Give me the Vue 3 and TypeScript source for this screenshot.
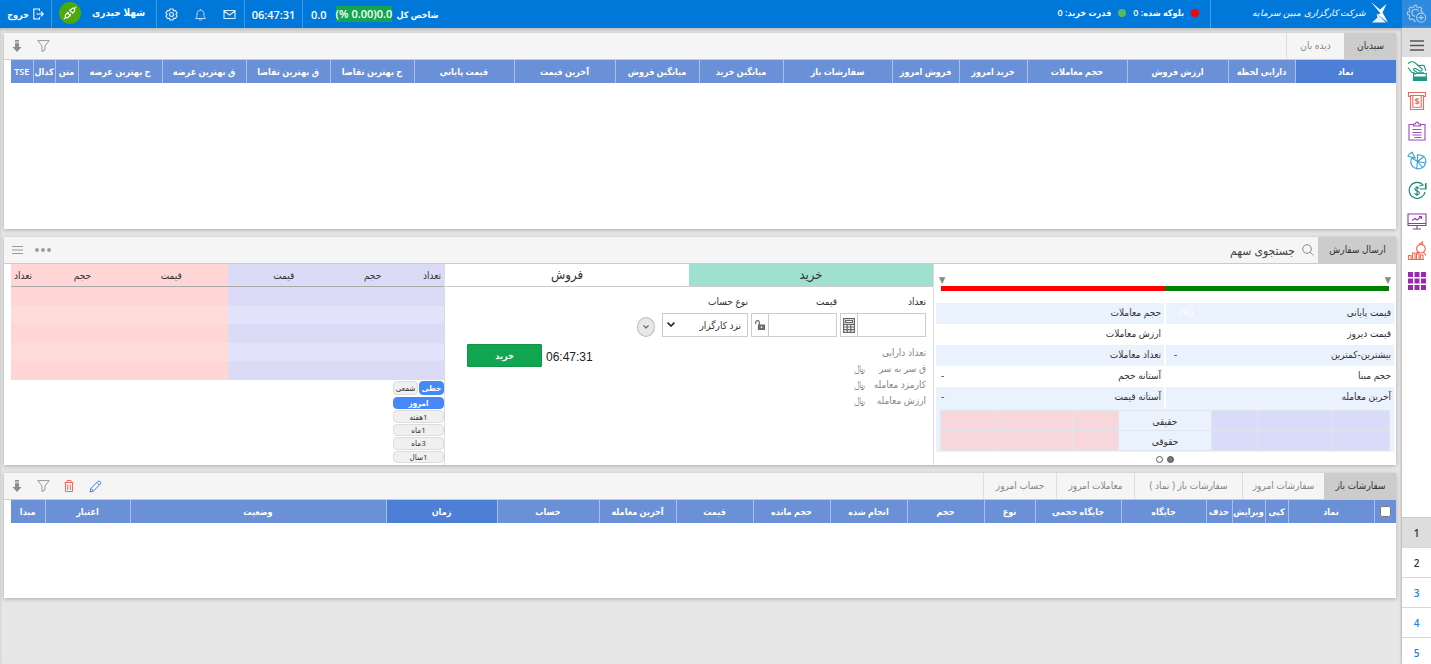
<script setup lang="ts">
import { ref } from 'vue'

interface Column {
  label: string
  width: number
  active?: boolean
}

interface SideIcon {
  name: string
  color: string
  line: string
  fill?: string
}

const col = (label: string, width: number, active = false): Column => ({ label, width, active })

const watchColumns: Column[] = [
  col('نماد', 101, true),
  col('دارایی لحظه', 67),
  col('ارزش فروش', 101),
  col('حجم معاملات', 100),
  col('خرید امروز', 68),
  col('فروش امروز', 67),
  col('سفارشات باز', 109),
  col('میانگین خرید', 84),
  col('میانگین فروش', 84),
  col('آخرین قیمت', 101),
  col('قیمت پایانی', 100),
  col('ح بهترین تقاضا', 84),
  col('ق بهترین تقاضا', 84),
  col('ق بهترین عرضه', 84),
  col('ح بهترین عرضه', 84),
  col('متن', 23),
  col('کدال', 22),
  col('TSE', 22),
]

const orderColumns: Column[] = [
  col('', 22),
  col('نماد', 86),
  col('کپی', 23),
  col('ویرایش', 33),
  col('حذف', 26),
  col('جایگاه', 85),
  col('جایگاه حجمی', 86),
  col('نوع', 51),
  col('حجم', 77),
  col('انجام شده', 77),
  col('حجم مانده', 77),
  col('قیمت', 77),
  col('آخرین معامله', 77),
  col('حساب', 102),
  col('زمان', 111, true),
  col('وضعیت', 256),
  col('اعتبار', 85),
  col('مبدا', 34),
]

const watchTabs: Column[] = [col('سبدبان', 52), col('دیده بان', 58)]
const orderTabs: Column[] = [
  col('سفارشات باز', 72),
  col('سفارشات امروز', 82),
  col('سفارشات باز ( نماد )', 108),
  col('معاملات امروز', 78),
  col('حساب امروز', 73),
]

const stats = [
  ['قیمت پایانی', '(%)', 'حجم معاملات', ''],
  ['قیمت دیروز', '', 'ارزش معاملات', ''],
  ['بیشترین-کمترین', '-', 'تعداد معاملات', ''],
  ['حجم مبنا', '', 'آستانه حجم', '-'],
  ['آخرین معامله', '', 'آستانه قیمت', '-'],
]

const traders = ['حقیقی', 'حقوقی']
const costs = [
  ['تعداد دارایی', ''],
  ['ق سر به سر', '﷼'],
  ['کارمزد معامله', '﷼'],
  ['ارزش معامله', '﷼'],
]
const ranges = ['امروز', '1هفته', '1ماه', '3ماه', '1سال']
const pages = [1, 2, 3, 4, 5]

const sideIcons: SideIcon[] = [
  {
    name: 'واریز',
    color: '#1b9a86',
    line: 'M1 2.500 4 .8C6 .6 8 1.500 9.500 3l5 4.500c1.500 1.500 0 3-1.500 2.500L9 7.800M1 6.500l3.500 4.700L8 12M9 7.800c-1.500-1-3 .2-2 1.500l3.500 2.500H17M10 4.500l7-.2 2 5.700M6.500 12.500h12.800v7H6.500zM8 12v2',
    fill: 'M6.500 16h12.800v3.500H6.500z',
  },
  {
    name: 'برداشت',
    color: '#ef6a5c',
    line: 'M3.500 5.500H1.500v-4h17v4h-2M3.500 4.500h13v14h-13zM5.800 4.500v11.700h8.400V4.500M12 8.300c-.6-.8-3.600-1-3.600.6 0 1.700 3.400.8 3.400 2.500 0 1.500-3 1.500-3.700.4M10 7v6.500',
  },
  {
    name: 'گزارش سفارش',
    color: '#9c4bb8',
    line: 'M6 3.500H2v15.500h16V3.500h-4M6.500 5V3h2c0-2.500 3-2.500 3 0h2v2zM5.500 8.500h9M5.500 11.500h9M5.500 14h9M7.500 16.500h7',
  },
  {
    name: 'سبد دارایی',
    color: '#3a9fd8',
    line: 'M10.500 10.500 17 5.500a7.500 7.500 0 1 1-13.200 5.200c0-1.200.4-2.500 1-3.600zM10.500 10.500 16 17M10.500 10.500l8.300 1.500M10.500 10.500V3.700c2.500 0 4.800.7 6.500 1.800M8 7 1 5.200C1.500 3.500 3 2 5 1.300zM10.500 10.500l-1 7.800',
  },
  {
    name: 'تبدیل ارز',
    color: '#16887e',
    line: 'M16.500 4.500A8 8 0 1 0 18 11M16.200 3.700 12.500 5M19 2v6h-6M18.500 2.500v5M12.300 7.500c-.8-1.500-4.500-1.300-4.500.6 0 2.500 4.600 1.300 4.600 3.800 0 2-4 2.200-4.800.4M10 5v10',
  },
  {
    name: 'تحلیل بازار',
    color: '#8c3bab',
    line: 'M1 3h18v11.500H1zM1 12.500h18M10 14.500v3M6 18h8M5 9.500l3-2 2 1.500 4.500-3.500M12 5.500h2.500V8',
  },
  {
    name: 'جستجوی نمودار',
    color: '#ee6a55',
    line: 'M1.500 18.500v-4H4v4zM5.500 18.500V12H8v6.500zM9.500 18.500V13H12v5.500zM13.500 18.500V14H16v4.500zM1 18.500h16M10 9.500A4.300 4.300 0 1 1 14.200 12C12 12 10.500 11 10 9.500zM11 11 9 12.500M16.500 11l2.500 3.500M12 3.500 15.500 1v3',
  },
]

const watchTab = ref(0)
const orderTab = ref(0)
const range = ref(0)
const page = ref(1)
const symbol = ref('')
const quantity = ref('')
const price = ref('')
const account = ref('broker')
</script>

<template>
  <div class="app" dir="rtl" lang="fa">
    <header class="topbar">
      <button class="settings" type="button" aria-label="تنظیمات">
        <svg width="20" height="20" viewBox="0 0 22 22" fill="none" stroke="#b9c8da" stroke-width="1.200">
          <path d="M8 1.500h2.500l.5 2 1.700.8 1.800-1.100 1.800 1.800-1 1.800.7 1.700 2 .5M8 1.500l-.5 2-1.700.8L4 3.200 2.200 5l1 1.800-.7 1.700-2 .5v2.500l2 .5.7 1.700-1 1.800L4 17.300l1.800-1 1.700.7.5 2h2" />
          <path d="M12.500 8a3.800 3.800 0 1 0-3.500 5.500" />
          <circle cx="15.500" cy="15" r="5" />
          <path d="M15.500 12v6M12.500 15h6" />
        </svg>
      </button>
      <div class="brand">
        <svg width="17" height="21" viewBox="0 0 17 21" fill="#fff">
          <path d="M0 0 9 7.500 15.500 2 11.500 10.500 17 20.500 6.500 12.500 9.500 11.500z" />
          <path d="M5.500 11.500 15 20.500H1L6.500 15.500z" opacity=".9" />
        </svg>
        <span class="brand-name">شرکت کارگزاری مبین سرمایه</span>
      </div>
      <div class="balance">
        <i class="dot red"></i><span>بلوکه شده: 0</span>
        <i class="dot green"></i><span>قدرت خرید: 0</span>
      </div>
      <div class="index">
        <span>شاخص کل</span>
        <span class="change" dir="ltr">(% 0.00)0.0</span>
        <span class="points">0.0</span>
      </div>
      <div class="clock">06:47:31</div>
      <div class="tools">
        <button type="button" aria-label="پیام‌ها">
          <svg width="13" height="13" viewBox="0 0 13 13" fill="none" stroke="#dcecfb" stroke-width="1.100">
            <path d="M1 2.500h11v8H1zM1 3l5.500 4L12 3" />
          </svg>
        </button>
        <button type="button" aria-label="اعلان‌ها">
          <svg width="13" height="13" viewBox="0 0 13 13" fill="none" stroke="#b9d8f4">
            <path d="M6.500 1v1M1.500 10.500c1.500-1 1.500-2.500 1.500-4.500 0-5 7-5 7 0 0 2 0 3.500 1.500 4.500zM5 10.500c0 2.300 3 2.300 3 0" />
          </svg>
        </button>
        <button type="button" aria-label="پیکربندی">
          <svg width="13" height="13" viewBox="0 0 13 13" fill="none" stroke="#dcecfb" stroke-width="1.200">
            <path d="M5 1h3l.5 1.600 2-.1L12 5l-1 1.500L12 8l-1.500 2.500-2-.1L8 12H5l-.5-1.600-2 .1L1 8l1-1.500L1 5l1.500-2.500 2 .1z" />
            <circle cx="6.500" cy="6.500" r="2" />
          </svg>
        </button>
      </div>
      <div class="user">
        <span class="user-name">شهلا حیدری</span>
        <span class="link-state">
          <svg width="14" height="14" viewBox="0 0 14 14" fill="none" stroke="#fff" stroke-width="1.100">
            <path d="M.8 13.200 2.500 11.500M3.800 6.300 7.700 10.200M4.500 7 2.800 8.700c-1.800 1.800.7 4.300 2.500 2.500L7 9.500M4.800 7.300 6 6.100M6.700 9.200 7.900 8M6.300 3.800l3.900 3.900M7 4.500l1.700-1.700c1.800-1.800 4.300.7 2.500 2.500L9.500 7M11.500 2.500 13.200.8" />
          </svg>
        </span>
      </div>
      <button class="logout" type="button">
        <svg width="11" height="12" viewBox="0 0 11 12" fill="none" stroke="#fff" stroke-width="1.100">
          <path d="M6.500 3V1H.8v10h5.700V9M3.500 6h6.700M8 3.700 10.200 6 8 8.300" />
        </svg>
        <span>خروج</span>
      </button>
    </header>

    <div class="body">
      <aside class="sidebar">
        <button class="menu" type="button" aria-label="منو">
          <svg width="14" height="11" viewBox="0 0 14 11" stroke="#555" stroke-width="1.300">
            <path d="M0 1h14M0 5.500h14M0 10h14" />
          </svg>
        </button>
        <button v-for="icon in sideIcons" :key="icon.name" type="button" :aria-label="icon.name">
          <svg width="20" height="20" viewBox="0 0 20 20" fill="none" :stroke="icon.color" stroke-width="1.100">
            <path v-if="icon.fill" :d="icon.fill" :fill="icon.color" />
            <path :d="icon.line" />
          </svg>
        </button>
        <button type="button" aria-label="همه">
          <svg width="18" height="18" viewBox="0 0 18 18" fill="#9c27b0">
            <path d="M0 0h5v5H0zM6.500 0h5v5h-5zM13 0h5v5h-5zM0 6.500h5v5H0zM6.500 6.500h5v5h-5zM13 6.500h5v5h-5zM0 13h5v5H0zM6.500 13h5v5h-5zM13 13h5v5h-5z" />
          </svg>
        </button>
        <nav class="pages">
          <button
            v-for="n in pages"
            :key="n"
            type="button"
            :class="{ current: page === n, fresh: n > 2 }"
            @click="page = n"
          >{{ n }}</button>
        </nav>
      </aside>

      <main class="panels">
        <section class="panel watch">
          <div class="bar">
            <button
              v-for="(tab, i) in watchTabs"
              :key="tab.label"
              class="tab"
              type="button"
              :class="{ on: watchTab === i }"
              :style="{ width: tab.width + 'px' }"
              @click="watchTab = i"
            >{{ tab.label }}</button>
            <div class="actions">
              <button type="button" aria-label="فیلتر">
                <svg width="13" height="12" viewBox="0 0 13 12" fill="none" stroke="#999"><path d="M.8.6h11.400L8 6v4L5 11.500V6z" /></svg>
              </button>
              <button type="button" aria-label="دریافت">
                <svg width="10" height="12" viewBox="0 0 10 12" fill="#8c8c8c"><path d="M3 0h4v1H3zM3 1.600h4v1H3zM3 3.200h4V7h2.500L5 12 .5 7H3z" /></svg>
              </button>
            </div>
          </div>
          <table class="grid">
            <colgroup>
              <col v-for="c in watchColumns" :key="c.label" :style="{ width: c.width + 'px' }" />
            </colgroup>
            <thead>
              <tr>
                <th v-for="c in watchColumns" :key="c.label" scope="col" :class="{ active: c.active }">{{ c.label }}</th>
              </tr>
            </thead>
          </table>
        </section>

        <section class="panel trade">
          <div class="bar">
            <button class="tab on wide" type="button">ارسال سفارش</button>
            <label class="search">
              <svg width="12" height="12" viewBox="0 0 12 12" fill="none" stroke="#888"><circle cx="5" cy="5" r="4.300" /><path d="M8.200 8.200 11.500 11.500" /></svg>
              <input v-model="symbol" type="text" placeholder="جستجوی سهم" aria-label="جستجوی سهم" />
            </label>
            <div class="actions">
              <button type="button" aria-label="بیشتر">
                <svg width="16" height="4" viewBox="0 0 16 4" fill="#999"><circle cx="2" cy="2" r="1.900" /><circle cx="8" cy="2" r="1.900" /><circle cx="14" cy="2" r="1.900" /></svg>
              </button>
              <button type="button" aria-label="فهرست">
                <svg width="11" height="8" viewBox="0 0 11 8" stroke="#999" stroke-width="1"><path d="M0 .5h11M0 4h11M0 7.500h11" /></svg>
              </button>
            </div>
          </div>

          <div class="columns">
            <div class="info">
              <div class="marks"><span>▼</span><span>▼</span></div>
              <div class="range"><i class="up"></i><i class="down"></i></div>
              <dl class="stats">
                <template v-for="row in stats" :key="row[0]">
                  <div><dt>{{ row[0] }}</dt><dd :class="{ ghost: row[1] === '(%)' }">{{ row[1] }}</dd></div>
                  <div><dt>{{ row[2] }}</dt><dd>{{ row[3] }}</dd></div>
                </template>
              </dl>
              <div class="traders">
                <table>
                  <tbody>
                    <tr v-for="name in traders" :key="name">
                      <td class="buy w57"></td><td class="buy w75"></td><td class="buy w46"></td>
                      <th scope="row">{{ name }}</th>
                      <td class="sell w46"></td><td class="sell w75"></td><td class="sell w57"></td>
                    </tr>
                  </tbody>
                </table>
              </div>
              <div class="slides"><i class="full"></i><i></i></div>
            </div>

            <form class="order" @submit.prevent>
              <div class="sides">
                <button class="side chosen" type="button">خرید</button>
                <button class="side" type="button">فروش</button>
              </div>
              <div class="fields">
                <div class="field">
                  <label for="quantity">تعداد</label>
                  <div class="box">
                    <input id="quantity" v-model="quantity" type="text" />
                    <button type="button" aria-label="ماشین حساب">
                      <svg width="12" height="15" viewBox="0 0 12 15" fill="none" stroke="#666" stroke-width="1.200">
                        <path d="M.6.6h10.800v13.800H.6zM2.500 2.500h7v2h-7zM.6 6.300h10.800M.6 9h10.800M.6 11.700h10.800M4.200 6.300v8M7.800 6.300v8" />
                      </svg>
                    </button>
                  </div>
                </div>
                <div class="field">
                  <label for="price">قیمت</label>
                  <div class="box">
                    <input id="price" v-model="price" type="text" />
                    <button type="button" aria-label="قفل قیمت">
                      <svg width="10" height="10" viewBox="0 0 10 10" fill="none" stroke="#666" stroke-width="1.200">
                        <path d="M.7 4V2.500c0-2.500 3.600-2.500 3.600 0V5" /><path d="M3.500 5H9.400v4.400H3.500z" fill="#777" /><path d="M6.500 6.500v1.500" stroke="#fff" />
                      </svg>
                    </button>
                  </div>
                </div>
                <div class="field">
                  <label for="account">نوع حساب</label>
                  <div class="box pick">
                    <select id="account" v-model="account"><option value="broker">نزد کارگزار</option></select>
                    <svg width="8" height="5" viewBox="0 0 8 5" fill="none" stroke="#222" stroke-width="1.600"><path d="M.6.6 4 4 7.400.6" /></svg>
                  </div>
                </div>
                <button class="more" type="button" aria-label="گزینه‌های بیشتر">
                  <svg width="6" height="4" viewBox="0 0 6 4" fill="none" stroke="#666" stroke-width="1.200"><path d="M.5.5 3 3 5.500.5" /></svg>
                </button>
              </div>
              <div class="summary">
                <dl class="costs">
                  <div v-for="c in costs" :key="c[0]"><dt>{{ c[0] }}</dt><dd>{{ c[1] }}</dd></div>
                </dl>
                <span class="time">06:47:31</span>
                <button class="send" type="submit">خرید</button>
              </div>
            </form>

            <div class="depth">
              <table class="book">
                <thead>
                  <tr>
                    <th class="count first">تعداد</th><th class="volume">حجم</th><th class="price">قیمت</th>
                    <th class="ask price">قیمت</th><th class="ask volume">حجم</th><th class="ask count last">تعداد</th>
                  </tr>
                </thead>
                <tbody>
                  <tr v-for="n in 5" :key="n"><td colspan="3"></td><td class="ask" colspan="3"></td></tr>
                </tbody>
              </table>
              <div class="chart-tools">
                <div class="kinds">
                  <button class="chip on" type="button">خطی</button>
                  <button class="chip" type="button">شمعی</button>
                </div>
                <div class="ranges">
                  <button
                    v-for="(r, i) in ranges"
                    :key="r"
                    class="chip"
                    type="button"
                    :class="{ on: range === i }"
                    @click="range = i"
                  >{{ r }}</button>
                </div>
              </div>
            </div>
          </div>
        </section>

        <section class="panel orders">
          <div class="bar">
            <button
              v-for="(tab, i) in orderTabs"
              :key="tab.label"
              class="tab"
              type="button"
              :class="{ on: orderTab === i }"
              :style="{ width: tab.width + 'px' }"
              @click="orderTab = i"
            >{{ tab.label }}</button>
            <div class="actions">
              <button type="button" aria-label="ویرایش">
                <svg width="13" height="13" viewBox="0 0 13 13" fill="none" stroke="#3f86dc"><path d="M1 12l.8-3.500L9 1.300c1.500-1 3.500 1 2.500 2.500L4.500 11zM8 2.500 10.500 5M1.800 8.500 4.500 11" /></svg>
              </button>
              <button type="button" aria-label="حذف">
                <svg width="10" height="12" viewBox="0 0 10 12" fill="none" stroke="#ee6a63"><path d="M.5 2.500h9M3 2.500v-2h4v2M1.500 2.500v9h7v-9M3.700 4.500v5.500M6.300 4.500v5.500" /></svg>
              </button>
              <button type="button" aria-label="فیلتر">
                <svg width="13" height="12" viewBox="0 0 13 12" fill="none" stroke="#999"><path d="M.8.6h11.400L8 6v4L5 11.500V6z" /></svg>
              </button>
              <button type="button" aria-label="دریافت">
                <svg width="10" height="12" viewBox="0 0 10 12" fill="#8c8c8c"><path d="M3 0h4v1H3zM3 1.600h4v1H3zM3 3.200h4V7h2.500L5 12 .5 7H3z" /></svg>
              </button>
            </div>
          </div>
          <table class="grid">
            <colgroup>
              <col v-for="c in orderColumns" :key="c.label" :style="{ width: c.width + 'px' }" />
            </colgroup>
            <thead>
              <tr>
                <th v-for="c in orderColumns" :key="c.label" scope="col" :class="{ active: c.active }">
                  <input v-if="!c.label" type="checkbox" aria-label="انتخاب همه" />
                  <template v-else>{{ c.label }}</template>
                </th>
              </tr>
            </thead>
          </table>
        </section>
      </main>
    </div>
  </div>
</template>

<style>
body {
  background: #e7e7e7;
}
</style>

<style scoped>
* {
  box-sizing: border-box;
}
.app {
  display: flex;
  flex-direction: column;
  height: 100vh;
  overflow: hidden;
  color: #333;
  font-family: "Open Sans", "DejaVu Sans Condensed", "DejaVu Sans", sans-serif;
  font-size: 10px;
}
button,
input,
select {
  margin: 0;
  padding: 0;
  border: 0;
  background: none;
  color: inherit;
  font: inherit;
}
button {
  display: flex;
  align-items: center;
  justify-content: center;
}
svg {
  display: block;
  flex: none;
}
dl,
dd {
  margin: 0;
}
table {
  width: 100%;
  border-collapse: collapse;
  table-layout: fixed;
}
th,
td {
  padding: 0;
}

/* top bar */
.topbar {
  display: flex;
  flex: none;
  height: 28px;
  background: #0078d9;
  color: #fff;
  font-size: 9px;
  font-weight: 600;
  white-space: nowrap;
}
.topbar > * {
  display: flex;
  flex: none;
  align-items: center;
}
.settings {
  width: 29px;
  background: #2d8ade;
}
.brand {
  gap: 5px;
  width: 192px;
  padding: 0 14px 3px 0;
  border-left: 1px solid #4a9ee4;
}
.brand-name {
  font-size: 9px;
  font-style: italic;
  font-weight: 400;
}
.balance {
  gap: 7px;
  padding: 0 11px 3px;
}
.dot {
  width: 8px;
  height: 8px;
  border-radius: 50%;
}
.dot.red {
  background: #f00;
}
.dot.green {
  background: #5cb860;
}
.topbar .index {
  gap: 4px;
  margin-right: auto;
  padding-left: 8px;
}
.change {
  background: #14a551;
  font-size: 11px;
  line-height: 16px;
}
.points {
  margin-right: 5px;
  font-size: 11px;
}
.clock {
  justify-content: center;
  width: 59px;
  border: solid #3f99e3;
  border-width: 0 1px;
  font-size: 11px;
}
.tools {
  justify-content: space-between;
  width: 87px;
  padding: 0 8px;
}
.user {
  justify-content: space-between;
  width: 106px;
  padding: 0 11px 2px 7px;
  border: solid #3f99e3;
  border-width: 0 1px;
}
.user-name {
  padding-bottom: 3px;
  font-size: 10px;
}
.link-state {
  display: grid;
  flex: none;
  place-items: center;
  width: 22px;
  height: 22px;
  border-radius: 50%;
  background: #4ca80c;
}
.logout {
  gap: 4px;
  width: 51px;
}

/* sidebar */
.body {
  display: flex;
  flex: 1;
  min-height: 0;
}
.sidebar {
  display: flex;
  flex: none;
  flex-direction: column;
  width: 29px;
  overflow: hidden;
  background: #fff;
  box-shadow: 0 0 3px #999;
}
.sidebar > button {
  flex: none;
  height: 30px;
  padding-bottom: 2px;
}
.sidebar > button.menu {
  height: 29px;
  padding: 5px 0 0;
  background: #ddd;
}
.pages {
  margin-top: auto;
  margin-bottom: -4px;
  border-top: 1px solid #ccc;
}
.pages button {
  width: 100%;
  height: 30px;
  border-bottom: 1px solid #d8d8d8;
  font-weight: 600;
}
.pages .current {
  background: #ddd;
}
.pages .fresh {
  color: #2383d8;
}

/* panels */
.panels {
  display: flex;
  flex: 1;
  flex-direction: column;
  gap: 8px;
  min-width: 0;
  padding: 5px 6px 0 4px;
  box-shadow: inset 0 2px 3px #bbb;
}
.panel {
  background: #fff;
  box-shadow: 0 1px 4px #aaa;
}
.watch {
  min-height: 196px;
}
.orders {
  min-height: 125px;
}
.bar {
  display: flex;
  height: 27px;
  border-bottom: 1px solid #ccc;
  background: #f5f5f5;
}
.tab {
  flex: none;
  padding-bottom: 2px;
  border-left: 1px solid #ddd;
  color: #888;
  white-space: nowrap;
}
.tab.on {
  border-color: #ccc;
  background: #ccc;
  color: #333;
}
.tab.wide {
  width: 78px;
}
.actions {
  display: flex;
  margin-right: auto;
}
.actions button {
  width: 26px;
}
.search {
  display: flex;
  align-items: center;
  gap: 7px;
  padding-right: 4px;
}
.search input {
  width: 120px;
  outline: 0;
  font-size: 12px;
}
.search input::placeholder {
  color: #444;
  opacity: 1;
}
.grid {
  width: calc(100% - 7px);
}
.grid th {
  height: 23px;
  padding-bottom: 1px;
  overflow: hidden;
  border-left: 1px solid #a9bfe8;
  background: #6a91d8;
  color: #fff;
  font-size: 9px;
  font-weight: 600;
  white-space: nowrap;
}
.grid th:last-child {
  border-left: 0;
}
.grid .active {
  background: #4d7fd6;
}
.grid input {
  display: block;
  width: 11px;
  height: 11px;
  margin: auto;
}

/* trade panel */
.columns {
  display: grid;
  grid-template-columns: 463fr 489fr 440fr;
  min-height: 201px;
}
.info {
  padding: 12px 2px 0;
  border-left: 1px solid #ddd;
}
.marks {
  display: flex;
  justify-content: space-between;
  height: 10px;
  padding: 0 3px;
  color: #888;
  font-size: 9px;
  line-height: 8px;
}
.range {
  display: flex;
  height: 5px;
  margin: 0 5px 12px;
}
.range i {
  flex: 1;
}
.up {
  background: #008000;
}
.down {
  background: #f00;
}
.stats {
  display: grid;
  grid-template-columns: 1fr 1fr;
  column-gap: 2px;
}
.stats div {
  display: flex;
  justify-content: space-between;
  height: 21px;
  padding: 0 3px 0 8px;
  line-height: 19px;
}
.stats div:nth-child(even) {
  padding-left: 5px;
}
.stats div:nth-child(4n + 1),
.stats div:nth-child(4n + 2) {
  background: #eaf2fe;
}
.stats .ghost {
  padding-left: 5px;
  color: #fff;
}
.traders {
  padding: 2px 4px 1px;
  background: #eaf2fe;
}
.traders td,
.traders th {
  height: 20px;
  border: 1px solid #e2e6ec;
  font-weight: 400;
}
.buy {
  background: #d9dcf8;
}
.sell {
  background: #f7d7dc;
}
.w57 {
  width: 57px;
}
.w75 {
  width: 75px;
}
.w46 {
  width: 46px;
}
.slides {
  display: flex;
  justify-content: center;
  gap: 4px;
  padding-top: 4px;
}
.slides i {
  width: 7px;
  height: 7px;
  border: 1px solid #555;
  border-radius: 50%;
}
.slides .full {
  background: #777;
}
.order {
  border-left: 1px solid #ddd;
}
.sides {
  display: grid;
  grid-template-columns: 1fr 1fr;
  height: 23px;
  border-bottom: 1px solid #ccc;
}
.side {
  padding-bottom: 3px;
  font-size: 13px;
}
.chosen {
  background: #9fe0cf;
}
.fields {
  display: flex;
  align-items: flex-end;
  gap: 3px;
  padding: 7px 7px 7px 0;
}
.field {
  width: 86px;
}
.field label {
  display: block;
  margin-bottom: 4px;
  line-height: 15px;
}
.box {
  display: flex;
  height: 24px;
  border: 1px solid #ccc;
}
.box input {
  flex: 1;
  min-width: 0;
}
.box button {
  width: 17px;
  border-right: 1px solid #ccc;
}
.pick {
  position: relative;
}
.pick select {
  width: 100%;
  padding-right: 6px;
  appearance: none;
}
.pick svg {
  position: absolute;
  top: 8px;
  left: 4px;
}
.more {
  width: 18px;
  height: 20px;
  margin-right: 4px;
  border: 1px solid #bbb;
  border-radius: 50%;
  background: #e8e8e8;
}
.summary {
  display: flex;
  align-items: flex-start;
  gap: 4px;
  padding: 0 7px 0 22px;
}
.costs {
  color: #888;
  line-height: 16px;
}
.costs div {
  display: flex;
}
.costs dt {
  width: 61px;
  white-space: nowrap;
}
.time {
  margin-right: auto;
  color: #222;
  font-family: "Liberation Sans", Arial, sans-serif;
  font-size: 12px;
  line-height: 27px;
}
.send {
  width: 75px;
  height: 23px;
  border: 1px solid #129447;
  border-radius: 1px;
  background: #12a550;
  color: #fff;
  font-size: 9px;
  font-weight: 600;
}
.depth {
  padding-left: 7px;
}
.book {
  height: 116px;
  border-collapse: separate;
  border-spacing: 0;
}
.book th {
  height: 23px;
  border-bottom: 1px solid #aaa;
  background: #dbdbf7;
  font-weight: 400;
}
.book td {
  background: #dbdbf7;
}
.book tr:nth-child(even) td {
  background: #e2e2fa;
}
.book th.ask,
.book td.ask {
  background: #ffd5d5;
}
.book tr:nth-child(even) td.ask {
  background: #ffdcdc;
}
.book .count {
  width: 9%;
}
.book .volume {
  width: 15%;
}
.book .price {
  width: 26%;
}
.book .first {
  padding-right: 3px;
  text-align: right;
}
.book .last {
  padding-left: 3px;
  text-align: left;
}
.chart-tools {
  width: 51px;
  margin-top: 1px;
}
.kinds {
  display: grid;
  grid-template-columns: 1fr 1fr;
  gap: 1px;
  height: 14px;
  margin-bottom: 2px;
}
.ranges {
  display: grid;
  grid-auto-rows: 1fr;
  gap: 1px;
  height: 66px;
}
.chip {
  border: 1px solid #ddd;
  border-radius: 4px;
  background: #f0f0f0;
  font-size: 8px;
  line-height: 10px;
}
.chip.on {
  border-color: #4688f5;
  background: #4688f5;
  color: #fff;
  font-weight: 600;
}
</style>
